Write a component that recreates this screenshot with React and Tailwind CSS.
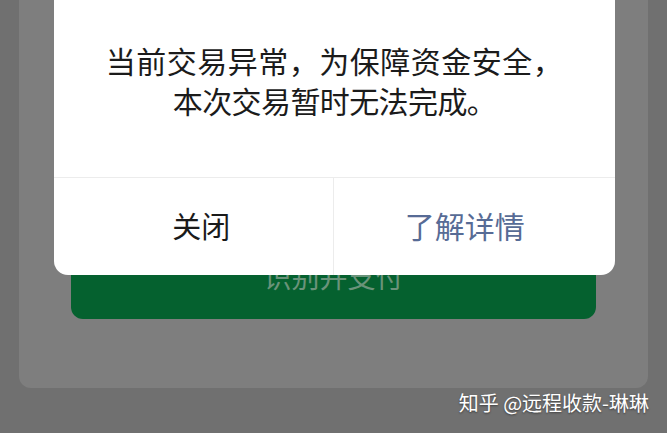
const CJK = { fontFamily: '"Noto Sans CJK SC", "Noto Sans", sans-serif' }

export default function App() {
  return (
    <div className="w-[667px] h-[433px] overflow-hidden bg-[#707070] px-[19px] relative" style={CJK}>
      {/* page behind the mask */}
      <div className="relative h-[388px] rounded-b-[12px] bg-[#7e7e7e] pt-[265px] pl-[52px] pr-[52px]">
        <div className="h-[54px] rounded-b-[12px] bg-[#05612f] flex items-start justify-center">
          <span className="text-[28px] leading-[32px] mt-[-5px] text-[#6a937a]">识别并支付</span>
        </div>
      </div>

      {/* dialog */}
      <div className="absolute left-[54px] top-[-20px] w-[561px] h-[295px] rounded-[14px] bg-white flex flex-col">
        <div className="h-[197px] pt-[60px] text-center text-[30px] leading-[40px] text-[#1b1b1b]">
          <p className="tracking-[0.5px]">当前交易异常，为保障资金安全，</p>
          <p className="tracking-[-0.6px]">本次交易暂时无法完成。</p>
        </div>
        <div className="flex-1 flex border-t border-[#ececec]">
          <button className="flex-1 flex items-center justify-center pl-[16px] pb-[2px] text-[29px] text-[#1a1a1a]">关闭</button>
          <div className="w-px bg-[#ececec]" />
          <button className="flex-1 flex items-center justify-center pr-[19px] pb-[2px] text-[30px] text-[#576b95]">了解详情</button>
        </div>
      </div>

      {/* watermark */}
      <div className="absolute right-[18px] top-[389px] text-[20px] leading-[28px] text-white [text-shadow:0_1px_2px_rgba(0,0,0,0.45)]">
        知乎 @远程收款-琳琳
      </div>
    </div>
  )
}
